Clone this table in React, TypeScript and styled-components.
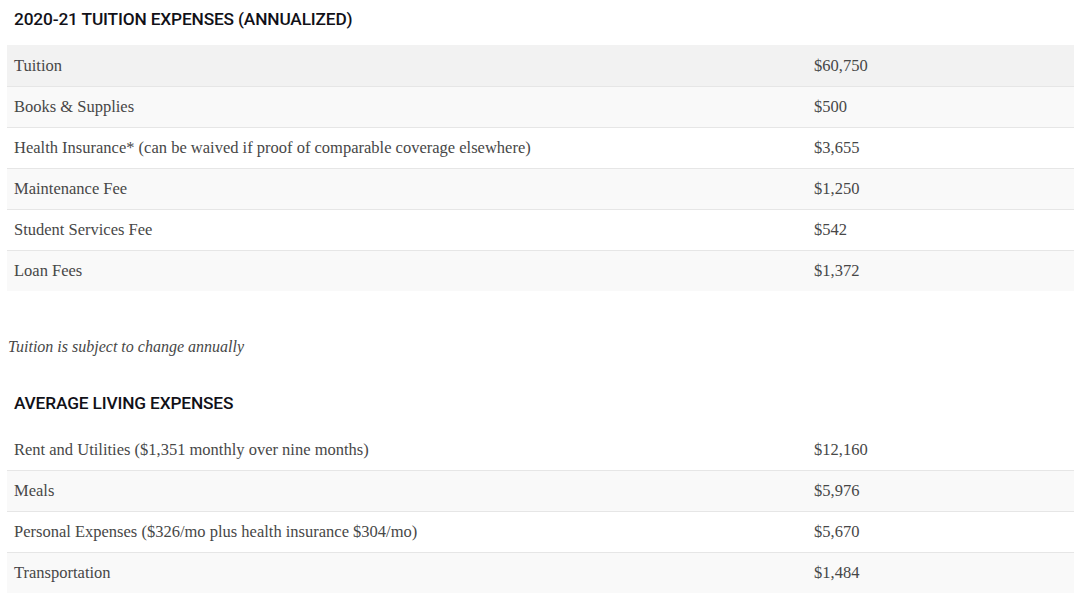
import React from 'react'
import styled, { createGlobalStyle } from 'styled-components'

const GlobalStyle = createGlobalStyle`
  html, body {
    margin: 0;
    padding: 0;
    background: #ffffff;
  }
`

interface IRow {
  label: string
  amount: string
}

const tuition: IRow[] = [
  { label: 'Tuition', amount: '$60,750' },
  { label: 'Books & Supplies', amount: '$500' },
  {
    label:
      'Health Insurance* (can be waived if proof of comparable coverage elsewhere)',
    amount: '$3,655',
  },
  { label: 'Maintenance Fee', amount: '$1,250' },
  { label: 'Student Services Fee', amount: '$542' },
  { label: 'Loan Fees', amount: '$1,372' },
]

const living: IRow[] = [
  {
    label: 'Rent and Utilities ($1,351 monthly over nine months)',
    amount: '$12,160',
  },
  { label: 'Meals', amount: '$5,976' },
  {
    label: 'Personal Expenses ($326/mo plus health insurance $304/mo)',
    amount: '$5,670',
  },
  { label: 'Transportation', amount: '$1,484' },
]

const ExpenseTable: React.FC<{ rows: IRow[]; highlightFirst?: boolean }> = ({
  rows,
  highlightFirst = false,
}) => (
  <Table>
    {rows.map((row, i) => (
      <Row
        key={row.label}
        $first={i === 0}
        $tone={i === 0 && highlightFirst ? 'dark' : i % 2 === 1 ? 'light' : 'none'}
      >
        <Cell>{row.label}</Cell>
        <Cell>{row.amount}</Cell>
      </Row>
    ))}
  </Table>
)

const App: React.FC = () => {
  return (
    <Page>
      <GlobalStyle />
      <Heading>2020-21 TUITION EXPENSES (ANNUALIZED)</Heading>
      <ExpenseTable rows={tuition} highlightFirst />
      <Note>Tuition is subject to change annually</Note>
      <Heading>AVERAGE LIVING EXPENSES</Heading>
      <ExpenseTable rows={living} />
    </Page>
  )
}

const Page = styled.div`
  display: flex;
  flex-direction: column;
  padding: 0 6px 0 7px;
  width: 1080px;
  height: 597px;
  box-sizing: border-box;
  overflow: hidden;
`

const Heading = styled.h2`
  margin: 7px 0 0 7px;
  height: 38px;
  font-family: 'Roboto', 'Liberation Sans', sans-serif;
  font-weight: 500;
  font-size: 17.3px;
  line-height: 24px;
  letter-spacing: -0.15px;
  color: #111118;
`

const Table = styled.div`
  display: flex;
  flex-direction: column;
`

const Row = styled.div<{ $first: boolean; $tone: 'dark' | 'light' | 'none' }>`
  display: grid;
  grid-template-columns: 800px 1fr;
  height: 41px;
  box-sizing: border-box;
  align-items: center;
  border-top: ${(p) => (p.$first ? 'none' : '1px solid #e6e6e6')};
  background: ${(p) =>
    p.$tone === 'dark' ? '#f2f2f2' : p.$tone === 'light' ? '#f9f9f9' : '#ffffff'};
`

const Cell = styled.div`
  padding: 0 7px;
  font-family: 'Liberation Serif', 'DejaVu Serif', serif;
  font-size: 16.5px;
  color: #474747;
  white-space: nowrap;
`

const Note = styled.p`
  margin: 44px 0 25px 1px;
  font-family: 'Liberation Serif', serif;
  font-style: italic;
  font-size: 16px;
  line-height: 24px;
  color: #474747;
`

export default App
